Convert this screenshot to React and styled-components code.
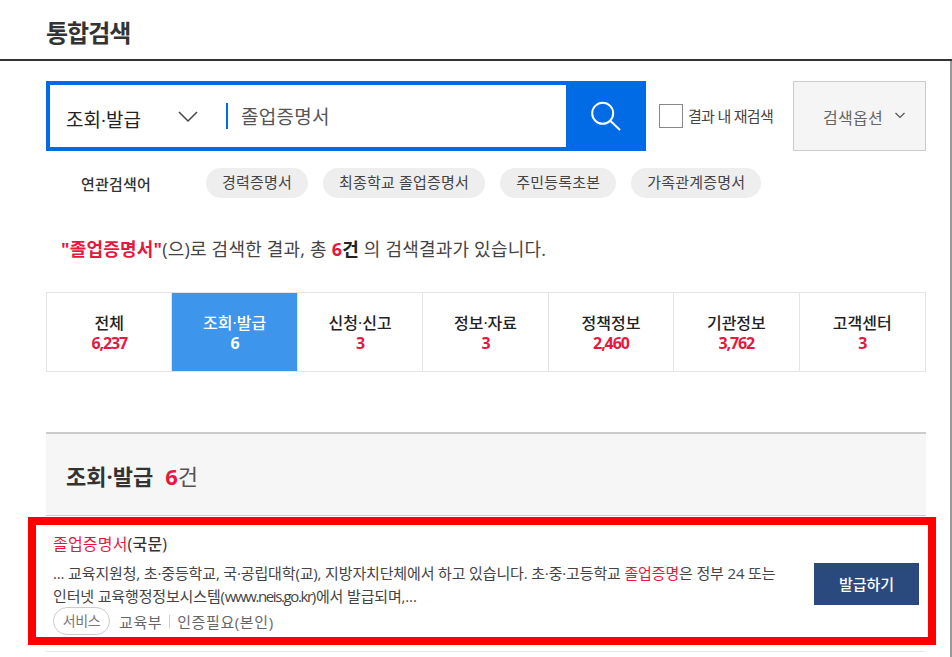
import React from 'react';
import styled, { createGlobalStyle } from 'styled-components';

const Global = createGlobalStyle`
  html, body { margin: 0; padding: 0; background: #fff; overflow: hidden; }
  body { font-family: "Open Sans", "Noto Sans CJK KR", "Noto Sans", sans-serif; color: #222; }
  * { box-sizing: border-box; }
`;

const Page = styled.div`width: 952px; height: 657px; overflow: hidden;`;
const TitleBar = styled.header`
  height: 61px; padding-left: 46px; border-bottom: 2px solid #333;
`;
const Title = styled.h1`
  margin: 0; padding-top: 14px; font-size: 24px; line-height: 38px; font-weight: 700; color: #333; letter-spacing: -1px;
`;
const Body = styled.main`
  height: 596px; padding: 20px 0 0 46px; border-right: 2px solid #999; 
`;
const Inner = styled.div`width: 880px;`;
const SearchRow = styled.div`display: flex; align-items: center; height: 70px;`;
const SearchBox = styled.div`
  display: flex; width: 600px; height: 70px; border: 4px solid #006be5;
`;
const Scope = styled.div`
  width: 176px; display: flex; align-items: center; padding: 7px 0 0 16px; position: relative;
  font-size: 19px; color: #222; letter-spacing: 0; line-height: 26px;
`;
const ScopeChevron = styled.svg`position: absolute; left: 128px; top: 26px; width: 20px; height: 12px; flex: none;`;
const Query = styled.div`
  flex: 1; display: flex; align-items: center; font-size: 19px; color: #555; letter-spacing: 0.3px; padding-bottom: 1px;
`;
const Bar = styled.span`width: 2px; height: 26px; background: #006be5; margin-right: 13px; margin-top: 1px;`;
const SearchBtn = styled.button`
  width: 80px; height: 70px; margin: -4px -4px -4px 0; border: 0; background: #006be5; flex: none; padding: 0;
  display: flex; align-items: center; justify-content: center;
`;
const Check = styled.span`
  width: 24px; height: 24px; border: 1px solid #888; margin-left: 13px; background: #fff; flex: none;
`;
const CheckLabel = styled.span`font-size: 15px; color: #444; margin-left: 5px; width: 105px; letter-spacing: -0.7px; padding-bottom: 1px;`;
const Options = styled.button`
  width: 133px; height: 70px; border: 1px solid #ccc; background: #f5f5f5; padding: 1px 0 0 29px;
  display: flex; align-items: center; font: inherit; font-size: 16px; color: #666; letter-spacing: 0.25px;
`;
const OptChevron = styled.svg`width: 10px; height: 7px; margin-left: 12px; flex: none; margin-bottom: 2px;`;

const RelatedRow = styled.div`display: flex; align-items: center; height: 30px; margin-top: 17px; padding-left: 35px;`;
const RelatedLabel = styled.span`width: 125px; font-size: 15px; font-weight: 500; color: #333; letter-spacing: 0.2px;`;
const Chip = styled.span`
  height: 30px; line-height: 29px; border-radius: 15px; background: #eee; padding: 0 16px; margin-right: 15px;
  font-size: 15px; color: #444; letter-spacing: 0.2px; white-space: nowrap;
`;
const Summary = styled.p`
  margin: 36px 0 0; padding-left: 15px; font-size: 18px; line-height: 30px; color: #444; letter-spacing: 0.2px;
  b { font-weight: 700; }
`;
const Red = styled.span`color: #e8173f; font-weight: ${p => p.$bold ? 700 : 400};`;
const Dark = styled.b`color: #222;`;

const Tabs = styled.div`
  display: grid; grid-template-columns: repeat(7, 1fr); margin-top: 28px; height: 80px;
  border: 1px solid #e5e5e5;
`;
const Tab = styled.div`
  display: flex; flex-direction: column; align-items: center; justify-content: center;
  border-right: ${p => p.$last ? 'none' : '1px solid #e5e5e5'};
  background: ${p => p.$active ? '#3d95ec' : '#fff'};
  color: ${p => p.$active ? '#fff' : '#222'};
  font-size: 16px; line-height: 20px; font-weight: 500; letter-spacing: 0; padding-top: 2px;
`;
const Count = styled.span`color: ${p => p.$active ? '#fff' : '#e8173f'}; font-weight: 700; font-size: 16px; letter-spacing: -1.1px;`;

const SectionHead = styled.div`
  margin-top: 60px; height: 84px; background: #f6f6f6; border-top: 2px solid #ccc; border-bottom: 1px solid #ccc;
  display: flex; align-items: center; padding-left: 20px; gap: 12px; padding-top: 1px;
`;
const SectionTitle = styled.h2`margin: 0; font-size: 22px; font-weight: 700; color: #333; letter-spacing: 0;`;
const SectionCount = styled.span`font-size: 22px; color: #555; letter-spacing: 0; b { color: #e8173f; font-weight: 700; font-size: 22px; }`;

const Item = styled.article`
  position: relative; height: 136px; padding: 17px 7px 0 7px; border-bottom: 1px solid #e8e8e8;
  display: flex; align-items: flex-start; margin-bottom: 20px;
`;
const Highlight = styled.div`
  position: absolute; left: -18px; top: 1px; width: 908px; height: 128px; border: 8px solid #f00; pointer-events: none;
`;
const ItemText = styled.div`flex: 1;`;
const ItemTitle = styled.div`font-size: 16px; line-height: 22px; font-weight: 500; color: #333; letter-spacing: 0.2px;`;
const ItemDesc = styled.p`
  margin: 7px 0 0; font-size: 15px; line-height: 23px; color: #444; letter-spacing: -0.15px; white-space: nowrap;
`;
const Url = styled.span`letter-spacing: -1.4px;`;
const Meta = styled.div`display: flex; align-items: center; margin-top: -1px; font-size: 15px; color: #666; letter-spacing: 0.6px;`;
const Pill = styled.span`
  height: 28px; line-height: 26px; width: 57px; text-align: center; border: 1px solid #ccc; border-radius: 14px; font-size: 14px; color: #777; letter-spacing: -0.3px;
  margin-right: 9px;
`;
const MetaBar = styled.span`width: 1px; height: 13px; background: #ccc; margin: 0 7px;`;
const IssueBtn = styled.button`
  width: 105px; height: 42px; border: 0; background: #2a4a7d; color: #fff; font: inherit; font-size: 15px; font-weight: 500; flex: none;
  margin-top: 30px; padding: 0 0 1px; letter-spacing: 0;
`;

const tabs = [
  ['전체', '6,237'], ['조회·발급', '6', true], ['신청·신고', '3'], ['정보·자료', '3'],
  ['정책정보', '2,460'], ['기관정보', '3,762'], ['고객센터', '3'],
];
const chips = ['경력증명서', '최종학교 졸업증명서', '주민등록초본', '가족관계증명서'];

export default function App() {
  return (
    <Page>
      <Global />
      <TitleBar><Title>통합검색</Title></TitleBar>
      <Body>
        <Inner>
          <SearchRow>
            <SearchBox>
              <Scope>
                조회·발급
                <ScopeChevron viewBox="0 0 20 12"><path d="M1 1l9 9 9-9" fill="none" stroke="#444" strokeWidth="1.5" /></ScopeChevron>
              </Scope>
              <Query><Bar />졸업증명서</Query>
              <SearchBtn aria-label="검색">
                <svg width="32" height="32" viewBox="0 0 32 32" fill="none" stroke="#fff" strokeWidth="2">
                  <circle cx="12.7" cy="13.300" r="10.500" />
                  <path d="M20.500 21l9.500 9" />
                </svg>
              </SearchBtn>
            </SearchBox>
            <Check />
            <CheckLabel>결과 내 재검색</CheckLabel>
            <Options>
              검색옵션
              <OptChevron viewBox="0 0 10 7"><path d="M.5 1l4.500 4.500L9.500 1" fill="none" stroke="#555" strokeWidth="1.2" /></OptChevron>
            </Options>
          </SearchRow>
          <RelatedRow>
            <RelatedLabel>연관검색어</RelatedLabel>
            {chips.map(c => <Chip key={c}>{c}</Chip>)}
          </RelatedRow>
          <Summary>
            <Red $bold>"졸업증명서"</Red>(으)로 검색한 결과, 총 <Red $bold>6</Red><Dark>건</Dark> 의 검색결과가 있습니다.
          </Summary>
          <Tabs>
            {tabs.map(([n, c, a], i) => (
              <Tab key={n} $active={a} $last={i === tabs.length - 1}>
                <span>{n}</span>
                <Count $active={a}>{c}</Count>
              </Tab>
            ))}
          </Tabs>
          <SectionHead>
            <SectionTitle>조회·발급</SectionTitle>
            <SectionCount><b>6</b>건</SectionCount>
          </SectionHead>
          <Item>
            <Highlight />
            <ItemText>
              <ItemTitle><Red>졸업증명서</Red>(국문)</ItemTitle>
              <ItemDesc>
                ... 교육지원청, 초·중등학교, 국·공립대학(교), 지방자치단체에서 하고 있습니다. 초·중·고등학교 <Red>졸업증명</Red>은 정부 24 또는<br />
                인터넷 교육행정정보시스템(<Url>www.neis.go.kr</Url>)에서 발급되며,...
              </ItemDesc>
              <Meta>
                <Pill>서비스</Pill>
                교육부<MetaBar />인증필요(본인)
              </Meta>
            </ItemText>
            <IssueBtn>발급하기</IssueBtn>
          </Item>
        </Inner>
      </Body>
    </Page>
  );
}
